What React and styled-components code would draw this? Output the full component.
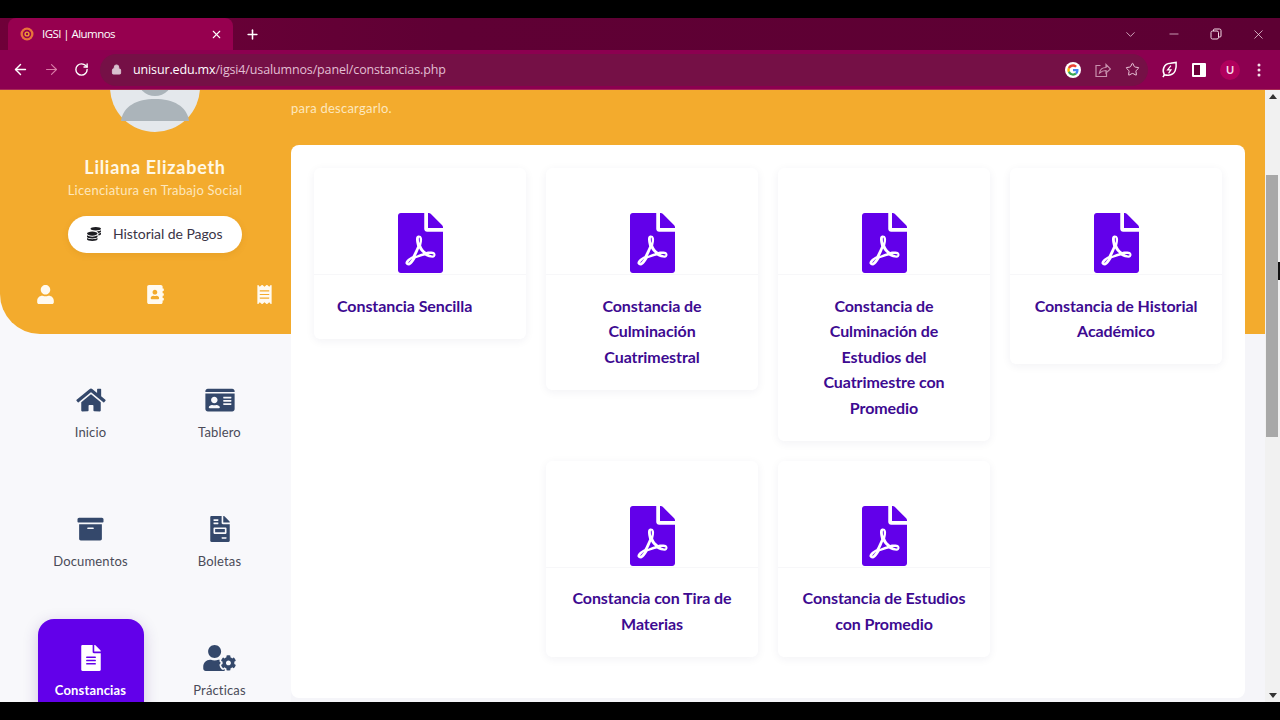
import React from "react";
import styled, { createGlobalStyle } from "styled-components";
import {
  FaHome,
  FaIdCard,
  FaArchive,
  FaFileInvoice,
  FaFileAlt,
  FaUserCog,
  FaFilePdf,
  FaCoins,
  FaUser,
  FaAddressBook,
  FaReceipt,
} from "react-icons/fa";
import {
  ArrowLeft,
  ArrowRight,
  RotateCw,
  Lock,
  Star,
  ChevronDown,
  Minus,
  X,
  Plus,
} from "lucide-react";

const GlobalStyle = createGlobalStyle`
  html, body {
    margin: 0;
    padding: 0;
    background: #000;
    overflow: hidden;
  }
  * {
    box-sizing: border-box;
  }
`;

const Screen = styled.div`
  width: 1280px;
  height: 720px;
  padding: 18px 0;
  background: #000;
  display: flex;
  flex-direction: column;
  overflow: hidden;
  position: relative;
  font-family: "Lato", "Noto Sans", sans-serif;
`;

const TabStrip = styled.div`
  height: 32px;
  flex: none;
  display: flex;
  align-items: flex-end;
  padding-left: 8px;
  background: linear-gradient(90deg, #6f0038 0%, #5f0034 35%, #5d0033 100%);
  color: #fff;
`;

const Tab = styled.div`
  width: 225px;
  height: 32px;
  display: flex;
  align-items: center;
  padding: 0 10px 0 12px;
  background: #96004f;
  border-radius: 8px 8px 0 0;
  font-family: "Open Sans", sans-serif;
  font-size: 11.5px;
  letter-spacing: -0.55px;
  span {
    flex: 1;
    margin-left: 8px;
    margin-top: -2px;
  }
`;

const NewTab = styled.div`
  margin: 0 0 6px 12px;
  height: 20px;
  display: flex;
  align-items: center;
`;

const WindowButtons = styled.div`
  margin-left: auto;
  height: 32px;
  display: flex;
  align-items: center;
  gap: 29px;
  padding-right: 14px;
  color: #f3dbe6;
`;

const Toolbar = styled.div`
  height: 40px;
  flex: none;
  display: flex;
  align-items: center;
  padding: 0 10px 0 12px;
  background: #8c0050;
  color: #fff;
  border-bottom: 1px solid #a82b55;
`;

const NavIcons = styled.div`
  display: flex;
  align-items: center;
  gap: 14px;
  width: 88px;
`;

const AddressBar = styled.div`
  width: 1048px;
  height: 32px;
  flex: none;
  display: flex;
  align-items: center;
  padding: 0 8px 0 11px;
  border-radius: 16px;
  background: #751046;
  font-family: "Open Sans", sans-serif;
  font-size: 12.5px;
  letter-spacing: -0.14px;
`;

const Url = styled.div`
  flex: 1;
  margin-left: 11px;
  color: #e2bfd2;
  b {
    color: #fff;
    font-weight: 400;
  }
`;

const AddressIcons = styled.div`
  display: flex;
  align-items: center;
  gap: 14px;
  color: #ecc9da;
`;

const ExtensionIcons = styled.div`
  display: flex;
  align-items: center;
  gap: 14px;
  margin-left: 13px;
`;

const ProfileBubble = styled.div`
  width: 20px;
  height: 20px;
  margin-right: 3px;
  border-radius: 50%;
  background: #b0005c;
  color: #f8dbe8;
  font-size: 11px;
  font-weight: 700;
  display: flex;
  align-items: center;
  justify-content: center;
`;

const Viewport = styled.div`
  flex: 1;
  min-height: 0;
  display: flex;
`;

const Page = styled.div`
  flex: 1;
  min-width: 0;
  display: flex;
  background: #f5f5f9;
`;

const Sidebar = styled.aside`
  width: 291px;
  flex: none;
  background: #f8f8fb;
  overflow: hidden;
`;

const Profile = styled.div`
  height: 244px;
  display: flex;
  flex-direction: column;
  align-items: center;
  background: #f3ab2d;
  border-radius: 0 0 0 40px;
  color: #fff;
`;

const AvatarClip = styled.div`
  width: 90px;
  height: 42px;
  flex: none;
  display: flex;
  align-items: flex-end;
  overflow: hidden;
  margin-left: 19px;
  svg {
    flex: none;
  }
`;

const Name = styled.div`
  margin: 23px 0 0 19px;
  font-size: 18px;
  line-height: 24px;
  font-weight: 700;
  letter-spacing: 0.72px;
  color: #fff8e6;
`;

const Career = styled.div`
  margin: 2px 0 0 19px;
  font-size: 13px;
  line-height: 18px;
  letter-spacing: 0.25px;
  color: #fde7bd;
`;

const PayButton = styled.div`
  width: 174px;
  height: 37px;
  margin: 17px 0 0 19px;
  display: flex;
  align-items: center;
  padding: 0 0 2px 19px;
  gap: 12px;
  border-radius: 19px;
  background: #fff;
  color: #3a3446;
  font-size: 14px;
  letter-spacing: -0.05px;
  box-shadow: 0 2px 6px rgba(160, 100, 0, 0.15);
  svg {
    color: #1d1d22;
  }
`;

const ProfileLinks = styled.div`
  width: 100%;
  margin-top: 32px;
  padding: 0 17px 0 36px;
  display: flex;
  justify-content: space-between;
  font-size: 19px;
  color: #fffaf0;
`;

const NavGrid = styled.nav`
  display: grid;
  grid-template-columns: 129px 129px;
  row-gap: 23px;
  padding: 27px 0 0 26px;
`;

const NavTile = styled.div`
  width: 106px;
  height: 106px;
  justify-self: center;
  display: flex;
  flex-direction: column;
  align-items: center;
  padding-top: 26px;
  border-radius: 16px;
  background: ${(p) => (p.$active ? "#6200ea" : "transparent")};
  box-shadow: ${(p) => (p.$active ? "0 4px 16px rgba(60, 0, 120, 0.2)" : "none")};
  color: ${(p) => (p.$active ? "#fff" : "#4a4b58")};
  font-size: 13px;
  letter-spacing: 0.15px;
  font-weight: ${(p) => (p.$active ? 700 : 400)};
  svg {
    flex: none;
    color: ${(p) => (p.$active ? "#fff" : "#34486b")};
    height: 26px;
    width: ${(p) => p.$iconWidth}px;
  }
  span {
    margin-top: 11px;
    line-height: 16px;
  }
`;

const Main = styled.main`
  flex: 1;
  min-width: 0;
  padding: 9px 20px 4px 0;
  display: flex;
  flex-direction: column;
  background: linear-gradient(#f3ab2d 244px, transparent 244px);
`;

const Intro = styled.p`
  margin: 0 0 28px;
  font-size: 13px;
  line-height: 18px;
  letter-spacing: 0.25px;
  color: #fde7bd;
`;

const Panel = styled.section`
  flex: 1;
  padding: 23px 23px 0;
  background: #fff;
  border-radius: 8px;
  display: flex;
  flex-wrap: wrap;
  justify-content: center;
  align-content: flex-start;
  align-items: flex-start;
  gap: 20px;
`;

const Card = styled.article`
  width: 212px;
  background: #fff;
  border-radius: 6px;
  box-shadow: 0 2px 10px rgba(40, 30, 90, 0.06);
`;

const CardIcon = styled.div`
  height: 107px;
  padding-top: 45px;
  display: flex;
  justify-content: center;
  border-bottom: 1px solid #f7f7f9;
  color: #6200ea;
  svg {
    display: block;
    height: 60px;
    width: 45px;
  }
`;

const CardTitle = styled.h3`
  margin: 0;
  padding: 17.5px 20px 20.5px 23px;
  font-size: 16px;
  line-height: 25.6px;
  font-weight: 700;
  letter-spacing: -0.08px;
  color: #3d0a91;
  text-align: ${(p) => (p.$left ? "left" : "center")};
  padding-right: ${(p) => (p.$left ? "20px" : "23px")};
`;

const Scrollbar = styled.div`
  width: 15px;
  flex: none;
  display: flex;
  flex-direction: column;
  align-items: center;
  padding: 4px 0;
  background: #f1f1f1;
`;

const ScrollTrack = styled.div`
  flex: 1;
  width: 100%;
  padding: 76px 2px 256px 1px;
  display: flex;
`;

const ScrollThumb = styled.div`
  flex: 1;
  background: #a8a8a8;
`;

const Arrow = styled.div`
  width: 0;
  height: 0;
  border-left: 4px solid transparent;
  border-right: 4px solid transparent;
  ${(p) => (p.$down ? "border-top: 5px solid #333;" : "border-bottom: 5px solid #333;")}
`;

const Cursor = styled.div`
  position: absolute;
  right: 0;
  top: 262px;
  width: 2px;
  height: 18px;
  background: #111;
`;

const navItems = [
  { label: "Inicio", icon: FaHome, iconWidth: 30 },
  { label: "Tablero", icon: FaIdCard, iconWidth: 30 },
  { label: "Documentos", icon: FaArchive, iconWidth: 27 },
  { label: "Boletas", icon: FaFileInvoice, iconWidth: 20 },
  { label: "Constancias", icon: FaFileAlt, iconWidth: 20, active: true },
  { label: "Prácticas", icon: FaUserCog, iconWidth: 33 },
];

const documents = [
  { id: 1, lines: ["Constancia Sencilla"], left: true },
  { id: 2, lines: ["Constancia de", "Culminación", "Cuatrimestral"] },
  {
    id: 3,
    lines: ["Constancia de", "Culminación de", "Estudios del", "Cuatrimestre con", "Promedio"],
  },
  { id: 4, lines: ["Constancia de Historial", "Académico"] },
  { id: 5, lines: ["Constancia con Tira de", "Materias"] },
  { id: 6, lines: ["Constancia de Estudios", "con Promedio"] },
];

const Favicon = () => (
  <svg width="14" height="14" viewBox="0 0 14 14">
    <circle cx="7" cy="7" r="6.5" fill="#e8743b" />
    <circle cx="7" cy="7" r="4.2" fill="#96004f" />
    <circle cx="7" cy="7" r="2.6" fill="#f0a030" />
    <circle cx="7" cy="7" r="1.2" fill="#96004f" />
  </svg>
);

const GoogleLogo = () => (
  <svg width="16" height="16" viewBox="0 0 48 48">
    <circle cx="24" cy="24" r="24" fill="#fff" />
    <path fill="#ea4335" d="M24 14c2.7 0 5 1 6.8 2.6l4.9-4.9C32.6 8.900 28.600 7 24 7c-6.600 0-12.300 3.800-15.100 9.300l5.700 4.400C16 16.800 19.700 14 24 14z" />
    <path fill="#4285f4" d="M40.500 24.600c0-1.200-.1-2.300-.3-3.400H24v6.500h9.300c-.4 2.100-1.600 3.900-3.400 5.100l5.500 4.300c3.200-3 5.100-7.400 5.100-12.500z" />
    <path fill="#fbbc05" d="M14.600 27.300c-.4-1-.6-2.100-.6-3.300s.2-2.300.6-3.300l-5.700-4.400C7.700 18.600 7 21.200 7 24s.7 5.400 1.900 7.700l5.700-4.400z" />
    <path fill="#34a853" d="M24 41c4.600 0 8.400-1.500 11.400-4.100l-5.500-4.300c-1.500 1-3.500 1.600-5.900 1.600-4.300 0-8-2.800-9.400-6.900l-5.700 4.400C11.700 37.200 17.400 41 24 41z" />
  </svg>
);

const ShareIcon = () => (
  <svg width="16" height="16" viewBox="0 0 16 16" fill="none" stroke="#c890ad" strokeWidth="1.2">
    <path d="M5.500 3.500H1v11h10.500V11" />
    <path d="M4.500 11c.5-3.500 3-5.500 6.500-5.500V2.500l4.500 4.500-4.500 4V8.500c-2.500 0-4.500.800-6.500 2.500z" />
  </svg>
);

const LeafIcon = () => (
  <svg width="17" height="17" viewBox="0 0 18 18" fill="none" stroke="#fff" strokeWidth="1.600">
    <path d="M3.500 14.500C1 10 2.500 3 10 2.500l6-1c.5 6-.5 13-8 13.500-1.800.1-3.300-.2-4.500-.5z" />
    <path d="M2 17l2-3" />
    <path d="M10.500 5L7 9.500h3.500L8 13" strokeWidth="1.300" />
  </svg>
);

const SidePanelIcon = () => (
  <svg width="14" height="14" viewBox="0 0 14 14">
    <rect x="0" y="0" width="14" height="14" rx="1" fill="#fff" />
    <rect x="2" y="2" width="6" height="10" fill="#6a0038" />
  </svg>
);

const RestoreIcon = () => (
  <svg width="12" height="12" viewBox="0 0 12 12" fill="none" stroke="currentColor" strokeWidth="1">
    <rect x="1" y="3" width="7.500" height="8" rx="1.500" />
    <path d="M3.500 3V2a1 1 0 0 1 1-1h5a1.500 1.500 0 0 1 1.500 1.500V8a1 1 0 0 1-1 1H8.500" />
  </svg>
);

const KebabIcon = () => (
  <svg width="4" height="14" viewBox="0 0 4 14" fill="#f5dfe9">
    <circle cx="2" cy="2" r="1.500" />
    <circle cx="2" cy="7" r="1.500" />
    <circle cx="2" cy="12" r="1.500" />
  </svg>
);

const Avatar = () => (
  <svg width="90" height="90" viewBox="0 0 90 90">
    <circle cx="45" cy="45" r="45" fill="#e4e8ec" />
    <circle cx="45" cy="36" r="18" fill="#abb4ba" />
    <path d="M11 79c2-15 16-22 34-22s32 7 34 22z" fill="#abb4ba" />
  </svg>
);

const App = () => {
  return (
    <>
      <GlobalStyle />
      <Screen>
        <TabStrip>
          <Tab>
            <Favicon />
            <span>IGSI | Alumnos</span>
            <X size={13} strokeWidth={2} />
          </Tab>
          <NewTab>
            <Plus size={15} strokeWidth={2.5} />
          </NewTab>
          <WindowButtons>
            <ChevronDown size={15} strokeWidth={1.2} />
            <Minus size={14} strokeWidth={1.2} />
            <RestoreIcon />
            <X size={15} strokeWidth={1.2} />
          </WindowButtons>
        </TabStrip>

        <Toolbar>
          <NavIcons>
            <ArrowLeft size={17} strokeWidth={2} />
            <ArrowRight size={17} strokeWidth={1.6} color="#d97ba6" />
            <RotateCw size={15} strokeWidth={2.2} />
          </NavIcons>
          <AddressBar>
            <Lock size={11} fill="#d9c2cf" color="#d9c2cf" />
            <Url>
              <b>unisur.edu.mx</b>/igsi4/usalumnos/panel/constancias.php
            </Url>
            <AddressIcons>
              <GoogleLogo />
              <ShareIcon />
              <Star size={15} strokeWidth={1.6} />
            </AddressIcons>
          </AddressBar>
          <ExtensionIcons>
            <LeafIcon />
            <SidePanelIcon />
            <ProfileBubble>U</ProfileBubble>
            <KebabIcon />
          </ExtensionIcons>
        </Toolbar>

        <Viewport>
          <Page>
            <Sidebar>
              <Profile>
                <AvatarClip>
                  <Avatar />
                </AvatarClip>
                <Name>Liliana Elizabeth</Name>
                <Career>Licenciatura en Trabajo Social</Career>
                <PayButton>
                  <FaCoins size={14} />
                  Historial de Pagos
                </PayButton>
                <ProfileLinks>
                  <FaUser />
                  <FaAddressBook />
                  <FaReceipt />
                </ProfileLinks>
              </Profile>
              <NavGrid>
                {navItems.map((item) => (
                  <NavTile key={item.label} $active={item.active} $iconWidth={item.iconWidth}>
                    <item.icon />
                    <span>{item.label}</span>
                  </NavTile>
                ))}
              </NavGrid>
            </Sidebar>

            <Main>
              <Intro>para descargarlo.</Intro>
              <Panel>
                {documents.map((doc) => (
                  <Card key={doc.id}>
                    <CardIcon>
                      <FaFilePdf />
                    </CardIcon>
                    <CardTitle $left={doc.left}>
                      {doc.lines.map((line, i) => (
                        <React.Fragment key={line}>
                          {i > 0 && <br />}
                          {line}
                        </React.Fragment>
                      ))}
                    </CardTitle>
                  </Card>
                ))}
              </Panel>
            </Main>
          </Page>

          <Scrollbar>
            <Arrow />
            <ScrollTrack>
              <ScrollThumb />
            </ScrollTrack>
            <Arrow $down />
          </Scrollbar>
        </Viewport>
        <Cursor />
      </Screen>
    </>
  );
};

export default App;
